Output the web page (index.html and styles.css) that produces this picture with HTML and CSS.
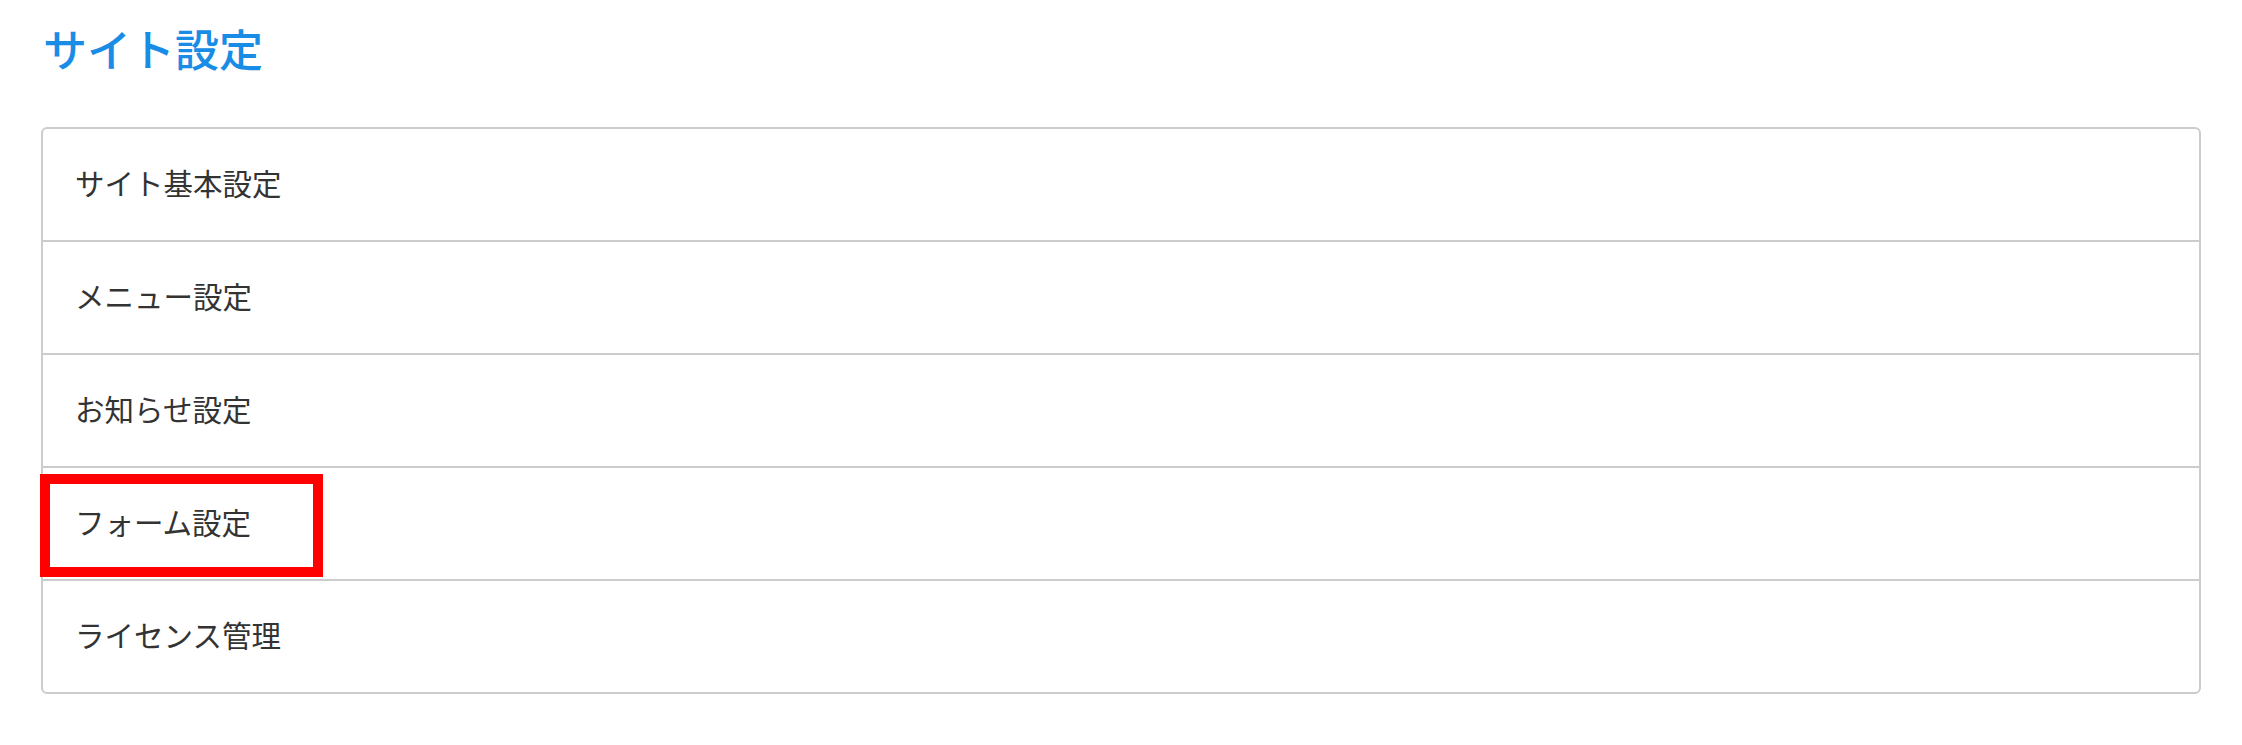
FILE: index.html
```html
<!DOCTYPE html>
<html lang="ja">
<head>
<meta charset="utf-8">
<link rel="stylesheet" href="styles.css">
</head>
<body>
<div class="page">
  <h1 class="title">サイト設定</h1>
  <ul class="list">
    <li class="row">サイト基本設定</li>
    <li class="row">メニュー設定</li>
    <li class="row">お知らせ設定</li>
    <li class="row highlighted">フォーム設定<span class="mark"></span></li>
    <li class="row">ライセンス管理</li>
  </ul>
</div>
</body>
</html>
```
FILE: styles.css
```css
html, body {
  margin: 0;
  padding: 0;
  background: #ffffff;
}
body {
  font-family: "Noto Sans CJK JP", "Noto Sans", sans-serif;
}
.page {
  padding: 26px 41px 0 41px;
}
.title {
  margin: 0 0 57px 0;
  padding-left: 2px;
  font-size: 44px;
  line-height: 44px;
  font-weight: 500;
  color: #198ce6;
}
.list {
  list-style: none;
  margin: 0;
  padding: 0;
  border: 2px solid #cccccc;
  border-radius: 6px;
}
.row {
  position: relative;
  height: 111px;
  box-sizing: border-box;
  display: flex;
  align-items: center;
  padding-left: 32px;
  padding-bottom: 5px;
  font-size: 29.5px;
  color: #333333;
  border-bottom: 2px solid #cccccc;
}
.row:not(:last-child) {
  height: 113px;
}
.row:last-child {
  border-bottom: none;
}
.mark {
  position: absolute;
  left: -3px;
  top: 6px;
  width: 263px;
  height: 83px;
  border: 10px solid #ff0000;
}
```
